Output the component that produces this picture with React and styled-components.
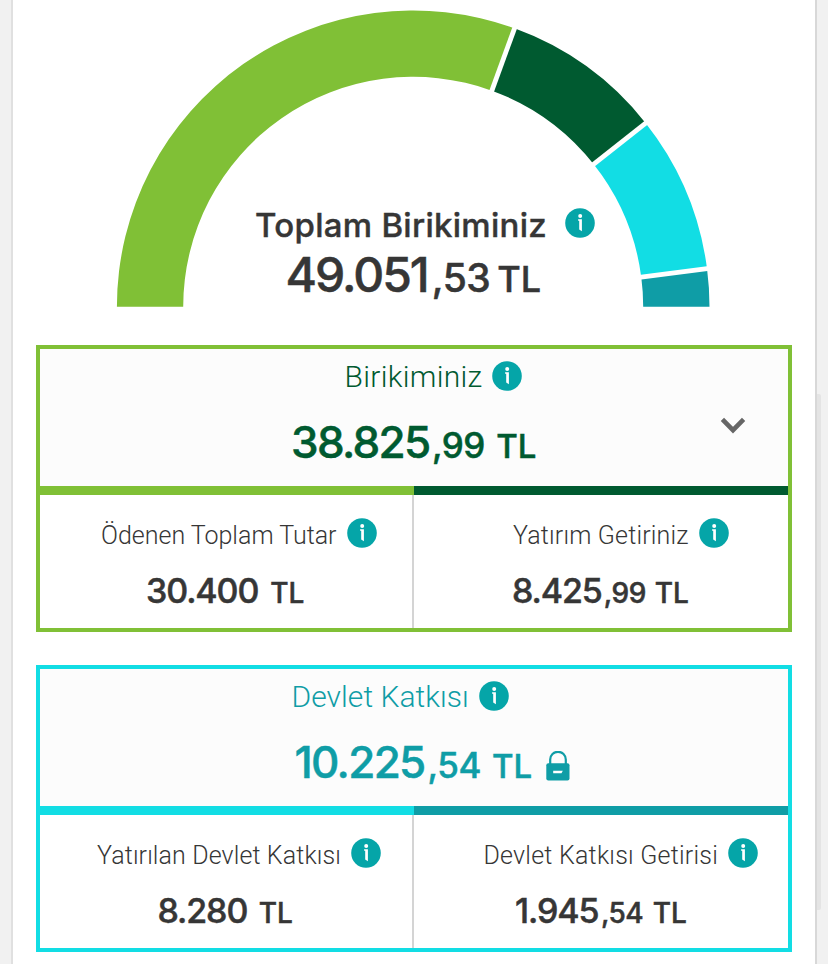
import React from 'react'
import styled, { createGlobalStyle } from 'styled-components'

const GlobalStyle = createGlobalStyle`
    * {
        box-sizing: border-box;
    }
    body {
        margin: 0;
        background-color: #f1f1f1;
        overflow: hidden;
    }
`;

const segments = [
    { from: 180, to: 70, color: '#80c036' },
    { from: 70, to: 38.3, color: '#005a30' },
    { from: 38.3, to: 7.4, color: '#12dde4' },
    { from: 7.4, to: 0, color: '#0f9da6' },
];

const CX = 400.2;
const CY = 306.8;
const OUTER = 296.3;
const INNER = 230;

const point = (radius, angle) => {
    const rad = angle * Math.PI / 180;
    return `${CX + radius * Math.cos(rad)} ${CY - radius * Math.sin(rad)}`;
}

const segmentPath = (from, to) => (
    `M${point(OUTER, from)} A${OUTER} ${OUTER} 0 0 1 ${point(OUTER, to)} L${point(INNER, to)} A${INNER} ${INNER} 0 0 0 ${point(INNER, from)} Z`
)

const Gauge = () => (
    <GaugeSvg width="802" height="345" viewBox="0 0 802 345">
        {segments.map(({ from, to, color }) => (
            <path key={from} d={segmentPath(from, to)} fill={color} />
        ))}
        {segments.slice(1).map(({ from }) => (
            <path key={from} d={`M${point(INNER - 4, from)} L${point(OUTER + 4, from)}`} stroke="#fff" strokeWidth="4.8" />
        ))}
    </GaugeSvg>
)

const Info = ({ gap, lift }) => (
    <InfoSvg $gap={gap} $lift={lift} width="30" height="30" viewBox="0 0 30 30">
        <circle cx="15" cy="15" r="14.8" fill="#05a5a8" />
        <circle cx="15.2" cy="7.9" r="2" fill="#fff" />
        <path d="M13.1 11.3h3.8v11.9l-2.7-1.6v-8.9h-1.1z" fill="#fff" />
    </InfoSvg>
)

const Chevron = () => (
    <ChevronSvg width="26" height="17" viewBox="0 0 26 17">
        <path d="M2.4 2.4L13 13.2L23.6 2.4" fill="none" stroke="#666" strokeWidth="4.6" />
    </ChevronSvg>
)

const Lock = () => (
    <LockSvg width="24" height="30" viewBox="0 0 24 30">
        <path d="M4.2 14V8.6a7.8 7.8 0 0 1 15.6 0V14" fill="none" stroke="#0f9da6" strokeWidth="2.2" />
        <rect x="0.3" y="12.3" width="23.2" height="17.2" rx="2" fill="#0f9da6" />
        <path d="M7.2 19.8h9.6l-1.3 2.4H7.2z" fill="#fff" />
    </LockSvg>
)

const Amount = ({ value, fraction, size, pad, gap, fracGap, children }) => (
    <AmountRow $pad={pad} $size={size}>
        <Whole $size={size}>{value}</Whole>
        {fraction && <Fraction $size={size} $gap={fracGap}>,{fraction}</Fraction>}
        <Currency $size={size} $gap={gap}>TL</Currency>
        {children}
    </AmountRow>
)

const App = () => {
    return (
        <Page>
            <GlobalStyle />
            <Content>
                <Summary>
                    <Gauge />
                    <SummaryText>
                        <TitleRow>
                            <Title>Toplam Birikiminiz</Title>
                            <Info gap={18} lift={3} />
                        </TitleRow>
                        <Amount size="large" value="49.051" fraction="53" pad={272.5} gap={7} fracGap={4} />
                    </SummaryText>
                </Summary>

                <Panel $color="#80c036">
                    <Header $color="#005a30">
                        <LabelRow $pad={304.5}>
                            <HeaderLabel $spacing={0.3}>Birikiminiz</HeaderLabel>
                            <Info gap={10} lift={3} />
                        </LabelRow>
                        <Amount size="medium" value="38.825" fraction="99" pad={251} gap={11.5} fracGap={2.5}>
                            <Chevron />
                        </Amount>
                    </Header>
                    <Bar><BarPart $color="#80c036" /><BarPart $color="#005a30" /></Bar>
                    <Cells>
                        <Cell>
                            <LabelRow $pad={61} $small>
                                <CellLabel $spacing={0}>Ödenen Toplam Tutar</CellLabel>
                                <Info gap={10} lift={7} />
                            </LabelRow>
                            <Amount size="small" value="30.400" pad={106} gap={12} />
                        </Cell>
                        <Cell>
                            <LabelRow $pad={99} $small>
                                <CellLabel $spacing={0.18}>Yatırım Getiriniz</CellLabel>
                                <Info gap={10} lift={7} />
                            </LabelRow>
                            <Amount size="small" value="8.425" fraction="99" pad={98} gap={9} fracGap={2} />
                        </Cell>
                    </Cells>
                </Panel>

                <Panel $color="#12dde4">
                    <Header $color="#0f9da6">
                        <LabelRow $pad={251.5}>
                            <HeaderLabel $spacing={0.05}>Devlet Katkısı</HeaderLabel>
                            <Info gap={10.5} lift={3} />
                        </LabelRow>
                        <Amount size="medium" value="10.225" fraction="54" pad={254.5} gap={11} fracGap={3}>
                            <Lock />
                        </Amount>
                    </Header>
                    <Bar><BarPart $color="#12dde4" /><BarPart $color="#0f9da6" /></Bar>
                    <Cells>
                        <Cell>
                            <LabelRow $pad={57} $small>
                                <CellLabel $spacing={0.12}>Yatırılan Devlet Katkısı</CellLabel>
                                <Info gap={10} lift={7} />
                            </LabelRow>
                            <Amount size="small" value="8.280" pad={117.5} gap={11.5} />
                        </Cell>
                        <Cell>
                            <LabelRow $pad={69.5} $small>
                                <CellLabel $spacing={0.23}>Devlet Katkısı Getirisi</CellLabel>
                                <Info gap={10} lift={7} />
                            </LabelRow>
                            <Amount size="small" value="1.945" fraction="54" pad={101} gap={9.5} fracGap={2.5} />
                        </Cell>
                    </Cells>
                </Panel>
            </Content>
            <Gutter>
                <ScrollThumb />
            </Gutter>
        </Page>
    )
}

const sizes = {
    large: { whole: 48, fraction: 39, currency: 36, line: 60, spacing: -2 },
    medium: { whole: 44, fraction: 35, currency: 33, line: 60, spacing: -1.7 },
    small: { whole: 34, fraction: 28, currency: 28, line: 45, spacing: -1.1 },
};

const Page = styled.div`
    display: flex;
    width: 828px;
    height: 964px;
    padding-left: 11px;
    overflow: hidden;
    color: #363636;
`;
const Content = styled.main`
    width: 804px;
    height: 964px;
    border-left: 2px solid #e0e0e0;
    background-color: #fff;
`;
const Gutter = styled.div`
    flex: 1;
    padding-top: 394px;
    border-left: 2px solid #d8d8d8;
`;
const ScrollThumb = styled.div`
    width: 4px;
    height: 516px;
    background-color: #e4e4e4;
    border-radius: 0 2px 2px 0;
`;
const Summary = styled.section`
    display: grid;
    height: 345px;
`;
const GaugeSvg = styled.svg`
    grid-area: 1 / 1;
`;
const SummaryText = styled.div`
    grid-area: 1 / 1;
    padding-top: 204px;
`;
const TitleRow = styled.div`
    display: flex;
    align-items: center;
    height: 41px;
    padding-left: 242px;
`;
const Title = styled.h1`
    margin: 0;
    font-family: Inter, sans-serif;
    font-size: 33px;
    font-weight: 500;
    line-height: 40px;
    letter-spacing: 0.28px;
    white-space: nowrap;
    -webkit-text-stroke: 0.4px currentColor;
`;
const Panel = styled.section`
    width: 756px;
    height: 286.5px;
    margin: 0 0 33.5px 23px;
    border: 4px solid ${({$color}) => $color};
`;
const Header = styled.div`
    height: 137px;
    padding-top: 8px;
    background-color: #fcfcfc;
    color: ${({$color}) => $color};
`;
const LabelRow = styled.div`
    display: flex;
    align-items: center;
    height: ${({$small}) => $small ? '34px' : '40px'};
    margin-bottom: 15px;
    padding-left: ${({$pad}) => $pad}px;
    white-space: nowrap;
`;
const HeaderLabel = styled.h2`
    margin: 0;
    font-family: Roboto, sans-serif;
    font-size: 30px;
    font-weight: 300;
    line-height: 40px;
    letter-spacing: ${({$spacing}) => $spacing}px;
`;
const CellLabel = styled.h3`
    margin: 0;
    font-family: Roboto, sans-serif;
    font-size: 25px;
    font-weight: 300;
    line-height: 34px;
    letter-spacing: ${({$spacing}) => $spacing}px;
`;
const AmountRow = styled.div`
    display: flex;
    align-items: baseline;
    height: ${({$size}) => sizes[$size].line}px;
    padding-left: ${({$pad}) => $pad}px;
    font-family: Inter, sans-serif;
    font-weight: 500;
    white-space: nowrap;
    -webkit-text-stroke: 0.5px currentColor;
`;
const Whole = styled.span`
    font-size: ${({$size}) => sizes[$size].whole}px;
    line-height: ${({$size}) => sizes[$size].line}px;
    letter-spacing: ${({$size}) => sizes[$size].spacing}px;
`;
const Fraction = styled.span`
    margin-left: ${({$gap}) => $gap}px;
    font-size: ${({$size}) => sizes[$size].fraction}px;
    line-height: 1;
    letter-spacing: -0.5px;
`;
const Currency = styled.span`
    margin-left: ${({$gap}) => $gap}px;
    font-size: ${({$size}) => sizes[$size].currency}px;
    line-height: 1;
`;
const Bar = styled.div`
    display: flex;
    height: 9px;
`;
const BarPart = styled.div`
    flex: 1;
    background-color: ${({$color}) => $color};
`;
const Cells = styled.div`
    display: grid;
    grid-template-columns: 1fr 1fr;
    height: 132.5px;
`;
const Cell = styled.div`
    padding-top: 24px;

    &:first-child {
        border-right: 2px solid #d4d4d4;
    }
`;
const InfoSvg = styled.svg`
    flex: none;
    margin-left: ${({$gap}) => $gap}px;
    margin-bottom: ${({$lift}) => $lift}px;
`;
const ChevronSvg = styled.svg`
    align-self: flex-start;
    margin: 5px 42px 0 auto;
`;
const LockSvg = styled.svg`
    align-self: flex-start;
    margin: 19px 0 0 14px;
`;

export default App
